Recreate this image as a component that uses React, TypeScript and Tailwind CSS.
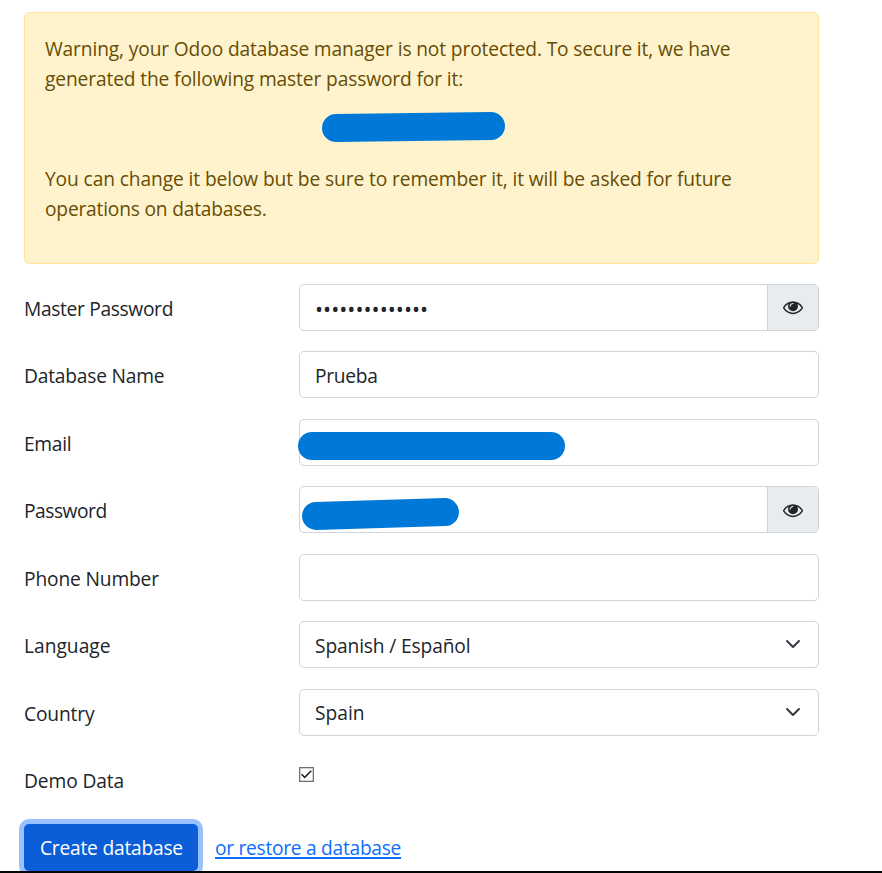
import type { ReactNode } from 'react';

function EyeIcon() {
  return (
    <svg width="20" height="20" viewBox="0 0 1792 1792" fill="#212529" aria-hidden="true">
      <path d="M1664 960q-152-236-381-353 61 104 61 225 0 185-131.5 316.5t-316.5 131.5-316.5-131.5-131.5-316.5q0-121 61-225-229 117-381 353 133 205 333.5 326.5t434.5 121.5 434.5-121.5 333.5-326.5zm-720-384q0-20-14-34t-34-14q-125 0-214.5 89.5t-89.5 214.5q0 20 14 34t34 14 34-14 14-34q0-86 61-147t147-61q20 0 34-14t14-34zm848 384q0 34-20 69-140 230-376.5 368.5t-499.5 138.5-499.5-139-376.5-368q-20-35-20-69t20-69q140-229 376.5-368t499.5-139 499.5 139 376.5 368q20 35 20 69z" />
    </svg>
  );
}

function Chevron() {
  return (
    <svg width="16" height="16" viewBox="0 0 16 16" fill="none" stroke="#343a40" strokeWidth="2" strokeLinecap="round" strokeLinejoin="round" aria-hidden="true">
      <path d="m2 5 6 6 6-6" />
    </svg>
  );
}

function Row({ label, tracking, children }: { label: string; tracking: string; children?: ReactNode }) {
  return (
    <div className="flex h-[67.45px] items-start">
      <div className={`w-[275px] shrink-0 pt-[10px] leading-[30px] ${tracking}`}>{label}</div>
      {children}
    </div>
  );
}

function Field({ children, end }: { children?: ReactNode; end?: ReactNode }) {
  return (
    <div className="relative flex h-[47px] w-[520px] rounded-[5px] border border-[#ced4da] bg-white">
      <div className="flex grow items-start pt-[8.5px] pl-[15px] leading-[30px]">{children}</div>
      {end}
    </div>
  );
}

function EyeButton() {
  return (
    <button type="button" aria-label="Show password" className="flex w-[51px] items-start justify-center rounded-r-[4px] border-l border-[#ced4da] bg-[#e9ecef] pt-[12.4px]">
      <EyeIcon />
    </button>
  );
}

export default function App() {
  return (
    <div className="relative h-[873px] w-[882px] overflow-hidden bg-white pt-3 pl-6 font-['Open_Sans',sans-serif] text-[19.2px] text-[#212529]">
      <div className="h-[252px] w-[795px] rounded-[5px] border border-[#ffe69c] bg-[#fff3cd] pt-[21px] pl-5 leading-[30px] whitespace-nowrap text-[#664d03]">
        <p className="tracking-[-0.135px]">Warning, your Odoo database manager is not protected. To secure it, we have</p>
        <p className="tracking-[-0.13px]">generated the following master password for it:</p>
        <div className="mt-[19px] ml-[277px] h-[28px] w-[183px] rotate-[-0.74deg] rounded-full bg-[#0078d7]" />
        <p className="mt-[23px] tracking-[-0.11px]">You can change it below but be sure to remember it, it will be asked for future</p>
        <p className="tracking-[-0.2px]">operations on databases.</p>
      </div>

      <form className="mt-5">
        <Row label="Master Password" tracking="tracking-[-0.33px]">
          <Field end={<EyeButton />}>
            <span className="text-[21.5px]">••••••••••••••</span>
          </Field>
        </Row>
        <Row label="Database Name" tracking="tracking-[-0.2px]">
          <Field><span className="tracking-[-0.3px]">Prueba</span></Field>
        </Row>
        <Row label="Email" tracking="tracking-[-0.3px]">
          <Field>
            <div className="absolute top-[12px] left-[-2px] h-[28px] w-[267px] rounded-full bg-[#0078d7]" />
          </Field>
        </Row>
        <Row label="Password" tracking="tracking-[-0.48px]">
          <Field end={<EyeButton />}>
            <div className="absolute top-[12.2px] left-[2px] h-[28px] w-[157px] rotate-[-1.7deg] rounded-full bg-[#0078d7]" />
          </Field>
        </Row>
        <Row label="Phone Number" tracking="tracking-[-0.15px]"><Field /></Row>
        <Row label="Language" tracking="tracking-[0px]">
          <Field end={<div className="mt-[14px] mr-[17px]"><Chevron /></div>}>
            <span className="tracking-[-0.14px]">Spanish / Español</span>
          </Field>
        </Row>
        <Row label="Country" tracking="tracking-[-0.15px]">
          <Field end={<div className="mt-[14px] mr-[17px]"><Chevron /></div>}>
            <span className="tracking-[0px]">Spain</span>
          </Field>
        </Row>
        <Row label="Demo Data" tracking="tracking-[-0.1px]">
          <svg className="mt-[10.85px]" width="15" height="15" viewBox="0 0 15 15" fill="none" aria-hidden="true">
            <rect x="0.65" y="0.65" width="13.7" height="13.7" stroke="#707070" strokeWidth="1.3" />
            <path d="m2.5 7.2 3.2 3.2 6.6-6.6" stroke="#222" strokeWidth="1.5" />
          </svg>
        </Row>
        <div className="flex items-start">
          <button type="button" className="flex h-[47px] w-[174px] items-start rounded-[5px] bg-[#0b5ed7] pt-[9.5px] pl-4 leading-[30px] whitespace-nowrap text-white shadow-[0_0_0_5px_#98c1fe]">
            <span className="tracking-[-0.22px]">Create database</span>
          </button>
          <a className="mt-[9.5px] ml-[17px] leading-[30px] tracking-[-0.28px] whitespace-nowrap text-[#0d6efd] underline decoration-2 underline-offset-2">
            or restore a database
          </a>
        </div>
      </form>
      <div className="absolute bottom-0 left-0 h-[2px] w-full bg-[#020605]" />
    </div>
  );
}
